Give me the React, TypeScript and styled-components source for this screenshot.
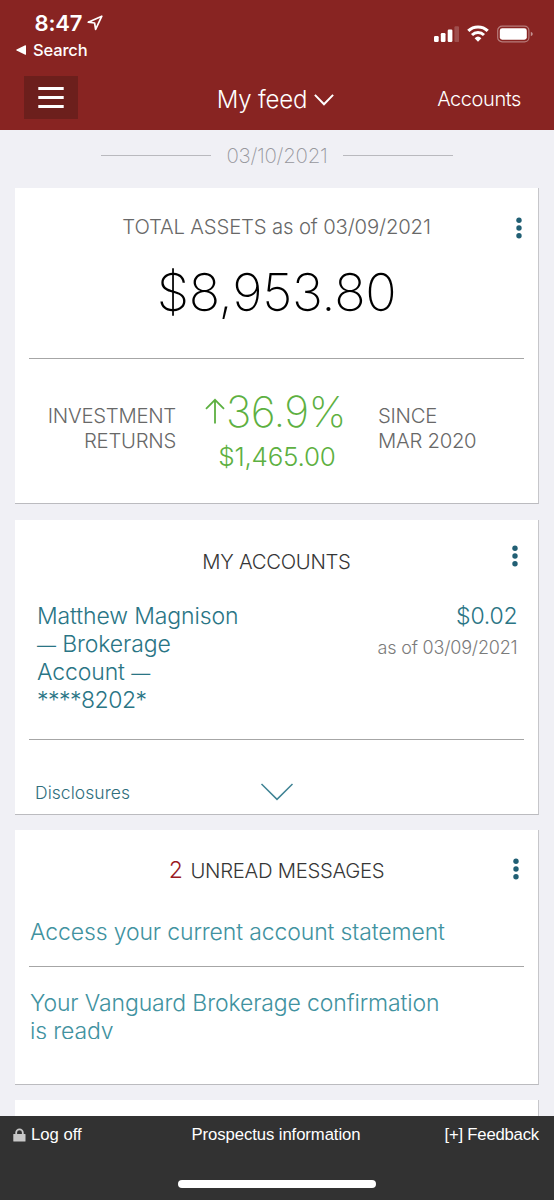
import React from 'react';
import styled, { createGlobalStyle } from 'styled-components';

const GlobalStyle = createGlobalStyle`
  *, *::before, *::after { box-sizing: border-box; }
  body {
    margin: 0;
    font-family: Inter, "Liberation Sans", sans-serif;
    font-weight: 300;
    background: #f0f0f5;
  }
  button { border: 0; padding: 0; background: none; color: inherit; font: inherit; }
  a { color: inherit; text-decoration: none; }
  svg { display: block; flex: none; }
`;

const Screen = styled.div`
  width: 554px;
  height: 1200px;
  display: flex;
  flex-direction: column;
  overflow: hidden;
  background: #f0f0f5;
`;

/* Header */

const Header = styled.header`
  flex: none;
  height: 130px;
  background: #882422;
  color: #fff;
`;

const StatusBar = styled.div`
  height: 76px;
  padding: 9px 21px 0 16px;
  display: flex;
  justify-content: space-between;
`;

const Clock = styled.div`
  padding-left: 18.5px;
  height: 27px;
  display: flex;
  align-items: center;
  gap: 5px;
  font-size: 22px;
  font-weight: 600;
  letter-spacing: -0.15px;
`;

const BackLink = styled.a`
  height: 27px;
  display: flex;
  align-items: center;
  gap: 7px;
  font-size: 16.5px;
  font-weight: 500;
  letter-spacing: -0.15px;
`;

const Indicators = styled.div`
  padding-top: 16px;
  display: flex;
  align-items: flex-start;
  gap: 8px;
`;

const Toolbar = styled.nav`
  height: 43px;
  padding: 0 33px 0 24px;
  display: grid;
  grid-template-columns: 1fr auto 1fr;
  align-items: center;
`;

const MenuButton = styled.button`
  width: 54px;
  height: 43px;
  display: flex;
  align-items: center;
  justify-content: center;
  background: #6c1f1c;
`;

const FeedTitle = styled.button`
  display: flex;
  align-items: center;
  gap: 7px;
  height: 43px;
  padding: 4px 0 0 6px;
  font-size: 24px;
  font-weight: 350;
  line-height: 39px;
  letter-spacing: -0.2px;
`;

const AccountsLink = styled.a`
  justify-self: end;
  padding-top: 3px;
  font-size: 20px;
  letter-spacing: -0.42px;
`;

/* Feed */

const Feed = styled.main`
  flex: 1;
  min-height: 0;
  padding: 0 15px;
  display: flex;
  flex-direction: column;
  gap: 15px;
  overflow: hidden;
`;

const DateDivider = styled.div`
  flex: none;
  height: 43px;
  display: flex;
  justify-content: center;
  gap: 15px;
  font-size: 20.5px;
  font-weight: 200;
  line-height: 51px;
  letter-spacing: -0.28px;
  color: #97979d;

  &::before, &::after {
    content: '';
    width: 110px;
    height: 1px;
    margin-top: 25px;
    background: #b9b9be;
  }
`;

const Card = styled.section<{ $height: number }>`
  flex: none;
  width: 524px;
  height: ${p => p.$height}px;
  background: #fff;
  border-right: 1px solid #c6c6ca;
  border-bottom: 1px solid #bbbbbf;
`;

const AssetsCard = styled(Card)`
  margin-bottom: 1px;
`;

const CardHeader = styled.div<{ $top: number }>`
  height: ${p => p.$top + 26}px;
  padding-top: ${p => p.$top}px;
  display: grid;
  grid-template-columns: 1fr auto 1fr;
`;

const CardTitle = styled.h2<{ $muted?: boolean }>`
  grid-column: 2;
  margin: 0;
  font-size: 20.3px;
  font-weight: 300;
  line-height: 26px;
  letter-spacing: ${p => (p.$muted ? '-0.15px' : '-0.29px')};
  color: ${p => (p.$muted ? '#686868' : '#363636')};
`;

const UnreadCount = styled.span`
  margin-right: 8px;
  font-size: 23px;
  line-height: 20px;
  color: #9a1a1f;
`;

const MoreButton = styled.button<{ $right: number; $offset: number }>`
  justify-self: end;
  height: 22px;
  margin: ${p => p.$offset}px ${p => p.$right}px 0 0;
`;

const Rule = styled.hr`
  height: 1px;
  margin: 0 14px;
  border: 0;
  background: #a6a6a6;
`;

const TotalAmount = styled.div`
  height: 118px;
  font-size: 52px;
  font-weight: 200;
  line-height: 106px;
  letter-spacing: -0.35px;
  text-align: center;
  color: #000;
`;

const Returns = styled.div`
  display: grid;
  grid-template-columns: 161px 202px 1fr;
`;

const ReturnsLabel = styled.div<{ $align: 'left' | 'right' }>`
  padding-top: 45px;
  font-size: 20.3px;
  line-height: 24.6px;
  letter-spacing: -0.26px;
  text-align: ${p => p.$align};
  color: #686868;
`;

const ReturnsFigures = styled.div`
  padding-top: 29.5px;
  color: #5db041;
`;

const ReturnPercent = styled.div`
  height: 46px;
  padding-right: 3px;
  display: flex;
  justify-content: center;
  gap: 1px;
  font-size: 42.6px;
  font-weight: 200;
  line-height: 46px;
  letter-spacing: -0.6px;

  svg { margin-top: 9px; }
`;

const ReturnAmount = styled.div`
  font-size: 26px;
  line-height: 43px;
  letter-spacing: -0.25px;
  text-align: center;
`;

const AccountRow = styled.div`
  height: 164px;
  padding: 27px 20.5px 0 22px;
  display: flex;
  justify-content: space-between;
`;

const AccountName = styled.a`
  width: 215px;
  font-size: 23px;
  line-height: 28px;
  letter-spacing: -0.12px;
  color: #2a7585;
`;

const Dash = styled.span`
  font-size: 19px;
  line-height: 20px;
`;

const AccountNumber = styled.span`
  letter-spacing: -0.5px;
`;

const Balance = styled.div`
  text-align: right;
`;

const BalanceAmount = styled.div`
  font-size: 23px;
  line-height: 28px;
  letter-spacing: -0.19px;
  color: #2a7585;
`;

const BalanceDate = styled.div`
  padding-top: 4px;
  font-size: 18px;
  line-height: 28px;
  letter-spacing: -0.19px;
  color: #7b7b7b;
`;

const CardFooter = styled.div`
  height: 74px;
  padding: 30px 19px 0 20px;
  display: grid;
  grid-template-columns: 1fr auto 1fr;
`;

const DisclosuresLink = styled.a`
  padding-top: 12px;
  font-size: 17.5px;
  line-height: 22px;
  letter-spacing: 0.05px;
  color: #2f6e7d;
`;

const ExpandButton = styled.button`
  height: 43px;
  display: flex;
  align-items: center;
`;

const Message = styled.a<{ $top: number; $height: number }>`
  display: block;
  height: ${p => p.$height}px;
  margin: ${p => p.$top}px 80px 0 15px;
  overflow: hidden;
  font-size: 23px;
  line-height: 28.2px;
  letter-spacing: -0.13px;
  color: #4192a0;
`;

/* Footer */

const Footer = styled.footer`
  flex: none;
  height: 84px;
  background: #323232;
  color: #fff;
  font-family: "Liberation Sans", Arial, sans-serif;
  font-weight: 400;
`;

const FooterLinks = styled.div`
  height: 64px;
  padding: 0 15px 0 13px;
  display: grid;
  grid-template-columns: 1fr auto 1fr;
  font-size: 16.7px;
  line-height: 37px;
`;

const FooterLink = styled.a<{ $spacing?: number; $end?: boolean }>`
  justify-self: ${p => (p.$end ? 'end' : 'start')};
  height: 37px;
  display: flex;
  align-items: center;
  gap: 5px;
  letter-spacing: ${p => p.$spacing ?? 0}px;
`;

const HomeIndicator = styled.div`
  width: 198px;
  height: 8px;
  margin: 0 auto;
  border-radius: 4px;
  background: #fff;
`;

function Dots() {
  return (
    <svg width="6" height="22" viewBox="0 0 6 22" fill="#215f74">
      <circle cx="3" cy="3.2" r="2.7" />
      <circle cx="3" cy="11" r="2.7" />
      <circle cx="3" cy="18.8" r="2.7" />
    </svg>
  );
}

export default function App() {
  return (
    <Screen>
      <GlobalStyle />
      <Header>
        <StatusBar>
          <div>
            <Clock>
              8:47
              <svg width="16" height="16" viewBox="0 0 16 16" fill="none" stroke="#fff" strokeWidth="1.7" strokeLinejoin="round">
                <path d="M14.8 1.2 1.2 7.2 7.6 8 8.6 14.4Z" />
              </svg>
            </Clock>
            <BackLink href="#">
              <svg width="10" height="10" viewBox="0 0 10 10" fill="#fff">
                <path d="M9.2.2Q10 0 10 .8v8.4q0 .8-.8.5L.6 5.5q-.8-.5 0-1Z" />
              </svg>
              Search
            </BackLink>
          </div>
          <Indicators>
            <svg width="25" height="17" viewBox="0 0 25 17" fill="#fff">
              <rect x="0" y="11" width="4.7" height="6" rx="1.2" />
              <rect x="6.8" y="8" width="4.7" height="9" rx="1.2" />
              <rect x="13.7" y="4.6" width="4.7" height="12.4" rx="1.2" />
              <rect x="20.4" y="1.2" width="4.7" height="15.8" rx="1.2" opacity=".2" />
            </svg>
            <svg width="22" height="17" viewBox="0 0 22 17" fill="none" stroke="#fff">
              <path d="M1.3 5.9a14 14 0 0 1 19.4 0" strokeWidth="3.2" />
              <path d="M5 10a8.6 8.6 0 0 1 12 0" strokeWidth="3" />
              <path d="M11 16.8 7.6 13.2a5 5 0 0 1 6.8 0Z" fill="#fff" stroke="none" />
            </svg>
            <svg width="36" height="18" viewBox="0 0 36 18">
              <rect x=".7" y="1.2" width="31.2" height="15.6" rx="4.4" fill="none" stroke="#fff" strokeOpacity=".4" strokeWidth="1.2" />
              <rect x="2.8" y="3.3" width="27" height="11.4" rx="2.4" fill="#fff" />
              <path d="M33.8 6.8q2 .7 2 2.2t-2 2.2Z" fill="#fff" fillOpacity=".5" />
            </svg>
          </Indicators>
        </StatusBar>
        <Toolbar>
          <MenuButton aria-label="Menu">
            <svg width="26" height="21" viewBox="0 0 26 21" fill="#fff">
              <rect x=".3" y="0" width="25.4" height="3" />
              <rect x=".3" y="9" width="25.4" height="3" />
              <rect x=".3" y="18" width="25.4" height="3" />
            </svg>
          </MenuButton>
          <FeedTitle>
            My feed
            <svg width="20" height="12" viewBox="0 0 20 12" fill="none" stroke="#fff" strokeWidth="2">
              <path d="M.9.9 10 10.3 19.1.9" />
            </svg>
          </FeedTitle>
          <AccountsLink href="#">Accounts</AccountsLink>
        </Toolbar>
      </Header>

      <Feed>
        <DateDivider>03/10/2021</DateDivider>

        <AssetsCard $height={316}>
          <CardHeader $top={26}>
            <CardTitle $muted>TOTAL ASSETS as of 03/09/2021</CardTitle>
            <MoreButton $right={16} $offset={3} aria-label="More"><Dots /></MoreButton>
          </CardHeader>
          <TotalAmount>$8,953.80</TotalAmount>
          <Rule />
          <Returns>
            <ReturnsLabel $align="right">INVESTMENT<br />RETURNS</ReturnsLabel>
            <ReturnsFigures>
              <ReturnPercent>
                <svg width="20" height="26" viewBox="0 0 20 26" fill="none" stroke="currentColor" strokeWidth="1.8">
                  <path d="M10 25.5V2M1 10.8 10 1.8l9 9" />
                </svg>
                36.9%
              </ReturnPercent>
              <ReturnAmount>$1,465.00</ReturnAmount>
            </ReturnsFigures>
            <ReturnsLabel $align="left">SINCE<br />MAR 2020</ReturnsLabel>
          </Returns>
        </AssetsCard>

        <Card $height={295}>
          <CardHeader $top={29}>
            <CardTitle>MY ACCOUNTS</CardTitle>
            <MoreButton $right={20} $offset={-4} aria-label="More"><Dots /></MoreButton>
          </CardHeader>
          <AccountRow>
            <AccountName href="#">
              Matthew Magnison<br />
              <Dash>—</Dash> Brokerage<br />
              Account <Dash>—</Dash><br />
              <AccountNumber>****8202*</AccountNumber>
            </AccountName>
            <Balance>
              <BalanceAmount>$0.02</BalanceAmount>
              <BalanceDate>as of 03/09/2021</BalanceDate>
            </Balance>
          </AccountRow>
          <Rule />
          <CardFooter>
            <DisclosuresLink href="#">Disclosures</DisclosuresLink>
            <ExpandButton aria-label="Expand">
              <svg width="34" height="18" viewBox="0 0 34 18" fill="none" stroke="#3f8394" strokeWidth="1.5">
                <path d="M1.5 1 17 16.4 32.5 1" />
              </svg>
            </ExpandButton>
          </CardFooter>
        </Card>

        <Card $height={255}>
          <CardHeader $top={28}>
            <CardTitle><UnreadCount>2</UnreadCount>UNREAD MESSAGES</CardTitle>
            <MoreButton $right={19} $offset={0} aria-label="More"><Dots /></MoreButton>
          </CardHeader>
          <Message href="#" $top={34} $height={48}>Access your current account statement</Message>
          <Rule />
          <Message href="#" $top={22} $height={50}>
            Your Vanguard Brokerage confirmation is ready
          </Message>
        </Card>

        <Card $height={120} />
      </Feed>

      <Footer>
        <FooterLinks>
          <FooterLink href="#">
            <svg width="13" height="14" viewBox="0 0 13 14">
              <path d="M3.2 7V4.6a3.3 3.3 0 0 1 6.6 0V7" fill="none" stroke="#c8c8c8" strokeWidth="1.8" />
              <rect x=".3" y="6" width="12.2" height="7.6" rx=".6" fill="#c8c8c8" />
            </svg>
            Log off
          </FooterLink>
          <FooterLink href="#" $spacing={-0.08}>Prospectus information</FooterLink>
          <FooterLink href="#" $spacing={-0.2} $end>[+] Feedback</FooterLink>
        </FooterLinks>
        <HomeIndicator />
      </Footer>
    </Screen>
  );
}
